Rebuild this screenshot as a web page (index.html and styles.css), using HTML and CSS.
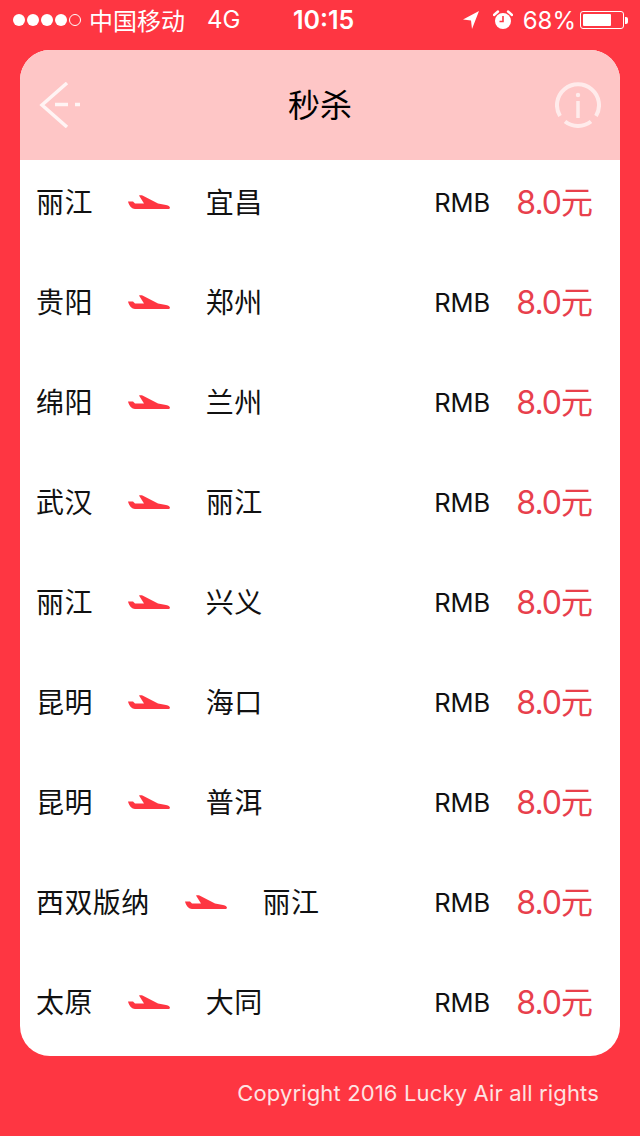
FILE: index.html
```html
<!DOCTYPE html>
<html lang="zh-CN">
<head>
  <meta charset="UTF-8" />
  <meta name="viewport" content="width=device-width, initial-scale=1.0"/>
  <title>秒杀</title>
  <link rel="stylesheet" href="styles.css">
</head>
<body>
  <div class="status-bar">
    <div class="status-left">
      <span class="signal"><i></i><i></i><i></i><i></i><i class="off"></i></span>
      <span class="carrier">中国移动</span>
      <span class="network">4G</span>
    </div>
    <div class="status-time">10:15</div>
    <div class="status-right">
      <svg class="loc-icon" width="18" height="20" viewBox="0 0 18 20"><path d="M17 1 L1 9.500 L9 10.500 L10 19 Z" fill="#fff"/></svg>
      <svg class="alarm-icon" width="20" height="20" viewBox="0 0 20 20">
        <circle cx="10" cy="11" r="8" fill="#fff"/>
        <path d="M1 5 L5 1.500 M19 5 L15 1.500" stroke="#fff" stroke-width="2.400" stroke-linecap="round"/>
        <path d="M10 6 V11.500 H6.500" stroke="#fe3642" stroke-width="1.600" fill="none"/>
      </svg>
      <span class="battery-pct">68%</span>
      <span class="battery"><span class="battery-fill"></span></span>
      <span class="battery-cap"></span>
    </div>
  </div>

  <div class="card">
    <div class="card-header">
      <svg class="back-icon" width="42" height="46" viewBox="0 0 42 46">
        <path d="M28 1 L3 23 L28 45" stroke="#fff" stroke-opacity=".8" stroke-width="3.500" fill="none"/>
        <path d="M16 22.500 H29 M36 22.500 H41" stroke="#fff" stroke-opacity=".8" stroke-width="3.500" fill="none"/>
      </svg>
      <h1>秒杀</h1>
      <svg class="info-icon" width="46" height="46" viewBox="0 0 46 46">
        <path d="M5 34 A21 21 0 1 1 41 34 M36 39.500 A21 21 0 0 1 10 39.500" stroke="#fff" stroke-opacity=".65" stroke-width="4" fill="none"/>
        <circle cx="23" cy="13" r="2.200" fill="#fff" fill-opacity=".65"/>
        <path d="M23 19 V36" stroke="#fff" stroke-opacity=".65" stroke-width="3.500"/>
      </svg>
    </div>
    <div class="flights" id="flights"></div>
  </div>

  <div class="copyright">Copyright 2016 Lucky Air all rights</div>

  <script>
    const flights = [
      ["丽江", "宜昌"],
      ["贵阳", "郑州"],
      ["绵阳", "兰州"],
      ["武汉", "丽江"],
      ["丽江", "兴义"],
      ["昆明", "海口"],
      ["昆明", "普洱"],
      ["西双版纳", "丽江"],
      ["太原", "大同"]
    ];

    const plane = `<svg class="plane" width="42" height="14" viewBox="0 0 42 14">
      <path d="M0 6.500 L5 6.500 L7 8.500 L16 8.500 L11 0.500 C12 0 13.500 0 14.500 0.500 L30 8.500 L38 10 C41 10.500 42 12 42 13 C42 14 40 14 38 14 L7 14 C4 14 1 11 0 6.500 Z" fill="#fe3642"/>
    </svg>`;

    document.getElementById("flights").innerHTML = flights.map(f => `
      <div class="flight">
        <span class="city">${f[0]}</span>
        ${plane}
        <span class="city">${f[1]}</span>
        <span class="rmb">RMB</span>
        <span class="price">8.0元</span>
      </div>`).join("");
  </script>
</body>
</html>
```

FILE: styles.css
```css
body {
  margin: 0;
  padding: 0;
  width: 640px;
  height: 1136px;
  overflow: hidden;
  background: #fe3642;
  font-family: "Inter", "Noto Sans CJK SC", sans-serif;
}

.status-bar {
  height: 40px;
  padding: 0 12px 0 13px;
  display: flex;
  align-items: center;
  justify-content: space-between;
  color: #fff;
  font-size: 24px;
  position: relative;
}

.status-left,
.status-right {
  display: flex;
  align-items: center;
}

.signal {
  display: flex;
  gap: 2px;
  margin-right: 8px;
}

.signal i {
  width: 12px;
  height: 12px;
  border-radius: 50%;
  background: #fff;
}

.signal i.off {
  box-sizing: border-box;
  background: none;
  border: 1px solid #fff;
}

.carrier {
  margin-right: 22px;
  margin-bottom: 2px;
}

.network {
  margin-bottom: 2px;
}

.status-time {
  font-size: 25px;
  font-weight: 600;
  position: absolute;
  left: 293px;
}

.loc-icon {
  margin-right: 13px;
}

.alarm-icon {
  margin-right: 10px;
}

.battery-pct {
  margin-right: 4px;
}

.battery {
  box-sizing: border-box;
  width: 44px;
  height: 18px;
  border: 1px solid #fff;
  border-radius: 3px;
  padding: 2px;
  display: flex;
}

.battery-fill {
  width: 28px;
  background: #fff;
  border-radius: 1px;
}

.battery-cap {
  width: 3px;
  height: 7px;
  margin-left: 1px;
  background: #fff;
  border-radius: 0 2px 2px 0;
}

.card {
  margin: 10px 20px 0;
  height: 1006px;
  background: #fff;
  border-radius: 30px;
  overflow: hidden;
}

.card-header {
  height: 110px;
  padding: 0 19px;
  background: #fec6c6;
  display: flex;
  align-items: center;
  justify-content: space-between;
}

.card-header h1 {
  margin: 0 0 4px 4px;
  font-size: 32px;
  font-weight: 400;
  color: #000;
}

.flights {
  display: flex;
  flex-direction: column;
  gap: 14px;
}

.flight {
  height: 86px;
  padding: 0 28px 0 16px;
  display: flex;
  align-items: center;
}

.city {
  font-size: 28px;
  letter-spacing: 0.4px;
  color: #111;
  margin-bottom: 4px;
}

.plane {
  margin: 0 36px 2px 35px;
}

.rmb {
  margin-left: auto;
  margin-right: 26px;
  margin-bottom: 2px;
  font-size: 25.500px;
  color: #111;
}

.price {
  font-size: 32px;
  letter-spacing: -1px;
  color: #e8404c;
  margin-bottom: 6px;
}

.copyright {
  margin-top: 24px;
  padding-right: 41px;
  text-align: right;
  font-size: 22px;
  letter-spacing: 0.15px;
  color: #fde3e3;
}
```
